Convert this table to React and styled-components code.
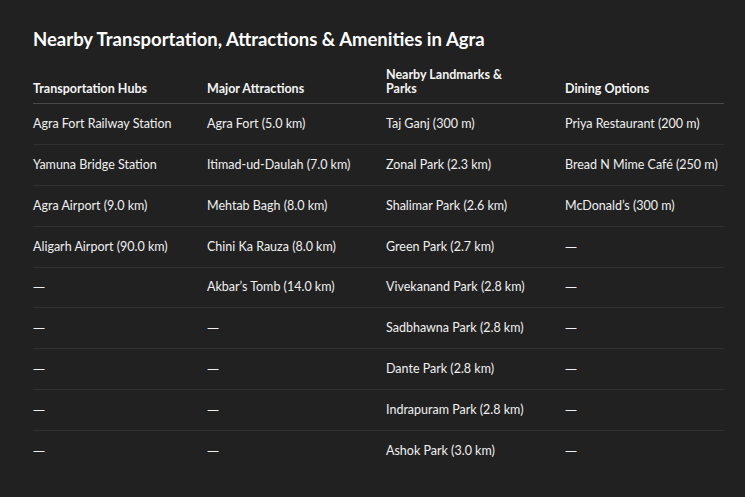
import React from "react";
import styled, { createGlobalStyle } from "styled-components";

const Global = createGlobalStyle`
  html, body { margin: 0; padding: 0; background: #212121; }
  body { font-family: "Segoe UI", "Lato", "Open Sans", sans-serif; color: #ececec; }
`;

const Page = styled.div`
  width: 745px;
  height: 497px;
  box-sizing: border-box;
  padding: 27px 21px 0 33px;
  background: #212121;
  overflow: hidden;
`;

const Title = styled.h3`
  margin: 0 0 17px 0;
  font-size: 18.5px;
  line-height: 24px;
  font-weight: 700;
  color: #ffffff;
`;

const Table = styled.table`
  width: 691px;
  border-collapse: collapse;
  font-size: 12.5px;
  table-layout: fixed;
`;

const Th = styled.th`
  text-align: left;
  vertical-align: bottom;
  font-weight: 700;
  color: #f4f4f4;
  line-height: 14px;
  padding: 0 8px 7px 0;
  border-bottom: 1px solid #4a4a4a;
  white-space: pre-line;
  width: ${(p) => p.$w - 8}px;
`;

const Td = styled.td`
  text-align: left;
  vertical-align: middle;
  color: #f0f0f0;
  height: 39.875px;
  padding: 0 8px 0 0;
  line-height: 16px;
  white-space: nowrap;
`;

const Tr = styled.tr`
  border-bottom: 1px solid ${(p) => (p.$last ? "transparent" : "#303030")};
`;

const Dash = styled.span`
  font-family: "DejaVu Sans", sans-serif;
  font-size: 12px;
`;

const headers = [
  { label: "Transportation Hubs", w: 174 },
  { label: "Major Attractions", w: 179 },
  { label: "Nearby Landmarks &\nParks", w: 179 },
  { label: "Dining Options", w: 159 },
];

const rows = [
  ["Agra Fort Railway Station", "Agra Fort (5.0 km)", "Taj Ganj (300 m)", "Priya Restaurant (200 m)"],
  ["Yamuna Bridge Station", "Itimad-ud-Daulah (7.0 km)", "Zonal Park (2.3 km)", "Bread N Mime Café (250 m)"],
  ["Agra Airport (9.0 km)", "Mehtab Bagh (8.0 km)", "Shalimar Park (2.6 km)", "McDonald’s (300 m)"],
  ["Aligarh Airport (90.0 km)", "Chini Ka Rauza (8.0 km)", "Green Park (2.7 km)", "—"],
  ["—", "Akbar’s Tomb (14.0 km)", "Vivekanand Park (2.8 km)", "—"],
  ["—", "—", "Sadbhawna Park (2.8 km)", "—"],
  ["—", "—", "Dante Park (2.8 km)", "—"],
  ["—", "—", "Indrapuram Park (2.8 km)", "—"],
  ["—", "—", "Ashok Park (3.0 km)", "—"],
];

export default function App() {
  return (
    <Page>
      <Global />
      <Title>Nearby Transportation, Attractions &amp; Amenities in Agra</Title>
      <Table>
        <thead>
          <tr>
            {headers.map((h) => (
              <Th key={h.label} $w={h.w}>{h.label}</Th>
            ))}
          </tr>
        </thead>
        <tbody>
          {rows.map((r, i) => (
            <Tr key={i} $last={i === rows.length - 1}>
              {r.map((c, j) => (
                <Td key={j}>{c === "—" ? <Dash>—</Dash> : c}</Td>
              ))}
            </Tr>
          ))}
        </tbody>
      </Table>
    </Page>
  );
}
